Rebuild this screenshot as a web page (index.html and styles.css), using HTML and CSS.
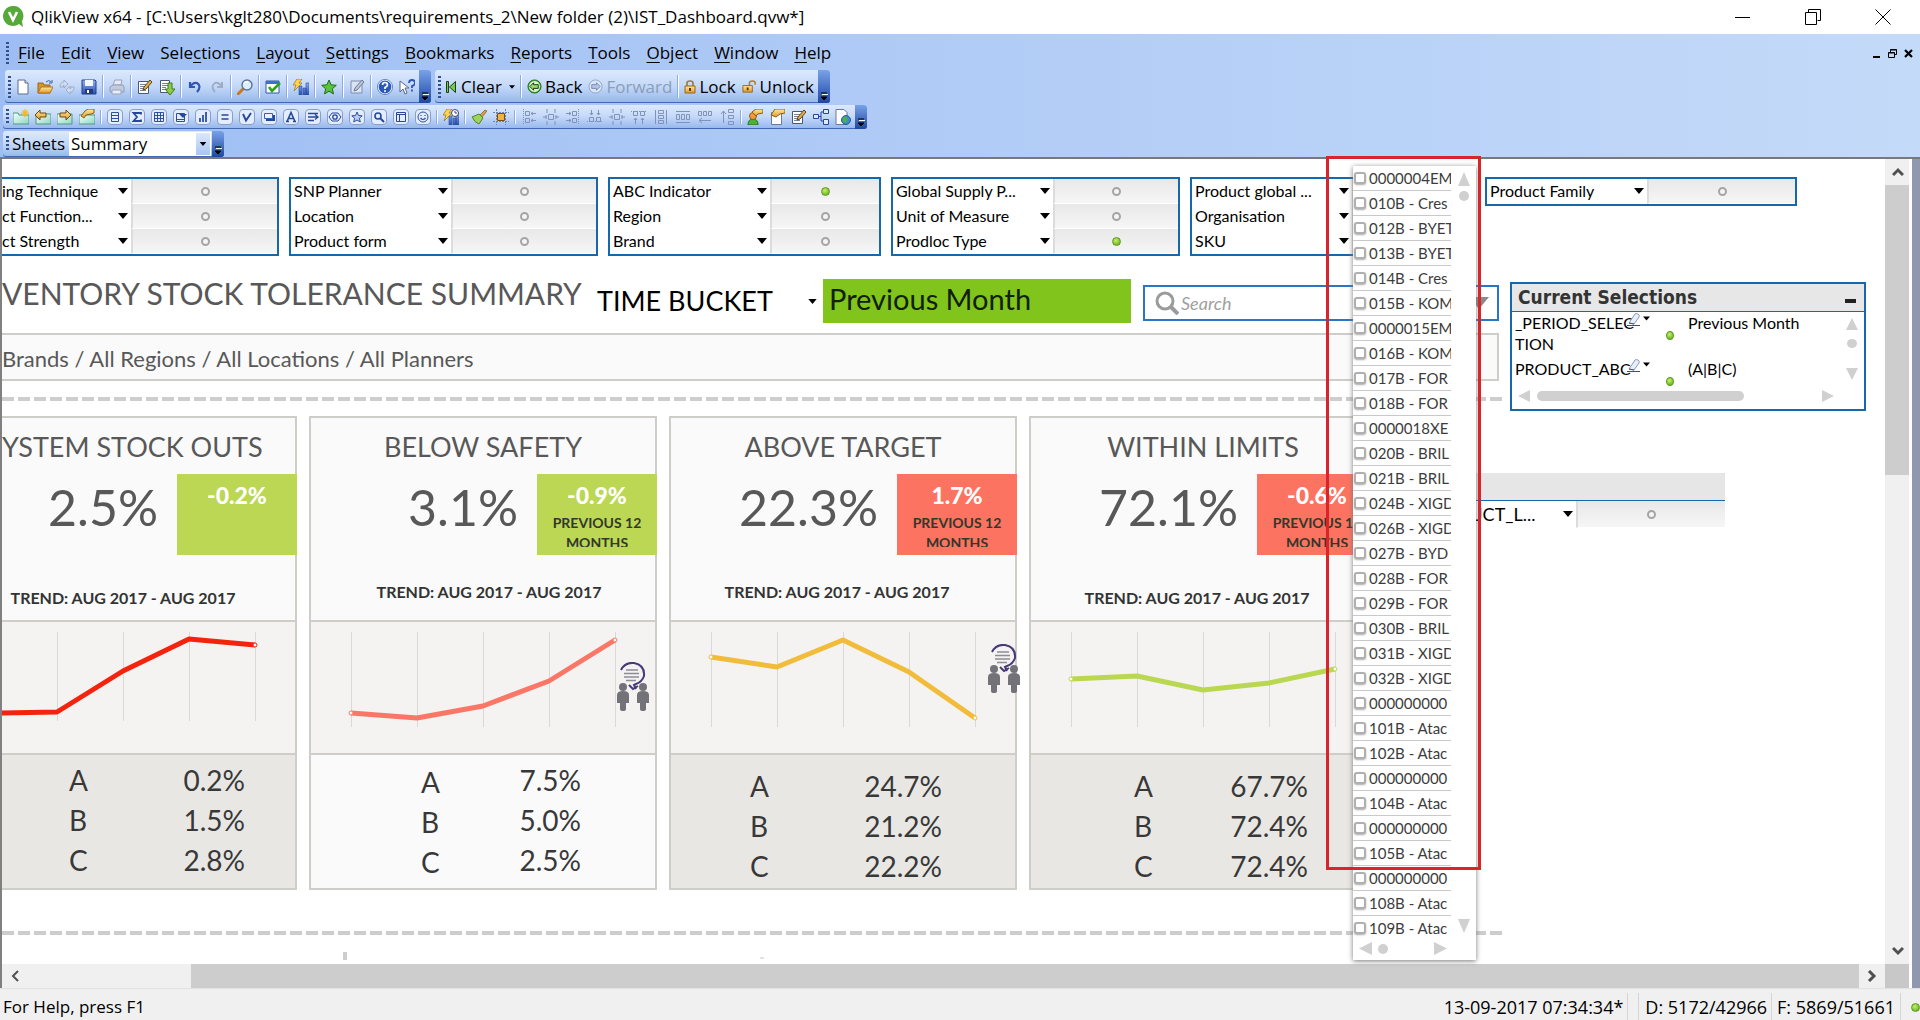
FILE: index.html
```html
<!DOCTYPE html>
<html lang="en">
<head>
<meta charset="utf-8">
<title>QlikView x64 - IST_Dashboard.qvw</title>
<link rel="stylesheet" href="styles.css">
</head>
<body>
<svg class="defs" aria-hidden="true">
  <defs>
    <linearGradient id="g-gold" x1="0" y1="0" x2="0" y2="1"><stop offset="0" stop-color="#ffe9a0"/><stop offset="1" stop-color="#e0992a"/></linearGradient>
    <linearGradient id="g-blue" x1="0" y1="0" x2="0" y2="1"><stop offset="0" stop-color="#8fb0ee"/><stop offset="1" stop-color="#2c52b4"/></linearGradient>
    <linearGradient id="g-sheet" x1="0" y1="0" x2="1" y2="1"><stop offset="0" stop-color="#f4fffb"/><stop offset="1" stop-color="#8fd6c0"/></linearGradient>
  </defs>
  <symbol id="new" viewBox="0 0 16 16"><path d="M3 1h7l3 3v11H3z" fill="#fff" stroke="#5d6c92"/><path d="M10 1v3h3" fill="#dde4f2" stroke="#5d6c92"/></symbol>
  <symbol id="open" viewBox="0 0 16 16"><path d="M1 14V4h5l1 2h6v8z" fill="#d8942e" stroke="#9a6416"/><path d="M1 14l3-6h12l-3 6z" fill="url(#g-gold)" stroke="#b0761e"/><path d="M9 3q3-3 5 0m1-2v3h-3" fill="none" stroke="#3b62b0"/></symbol>
  <symbol id="reload" viewBox="0 0 16 16"><path d="M1 8Q1 3 5 3V1l4 4-4 4V6Q4 6 4 8zM15 8q0 5-4 5v2l-4-4 4-4v3q1 0 1-2z" fill="#d3dced" stroke="#8c9bbb" stroke-width=".7"/></symbol>
  <symbol id="save" viewBox="0 0 16 16"><path d="M1 1h13l1 1v13H1z" fill="url(#g-blue)" stroke="#23418c"/><path d="M4 1h8v6H4z" fill="#f2f6ff"/><path d="M4 10h8v5H4z" fill="#223b7c"/><path d="M6 11h2v3H6z" fill="#fff"/></symbol>
  <symbol id="print" viewBox="0 0 16 16"><path d="M4 6l2-5h7l-1 5z" fill="#e4e9f4" stroke="#98a3bd"/><path d="M1 8l3-2h10l1 2v5H1z" fill="#c3ccde" stroke="#929db8"/><path d="M3 11h9v4H3z" fill="#e9edf6" stroke="#98a3bd"/></symbol>
  <symbol id="edit" viewBox="0 0 16 16"><path d="M1.500 2.500h10v12h-10z" fill="#fff" stroke="#4a5776"/><path d="M3 5.500h6M3 7.500h5M3 9.500h3M3 11.500h6" stroke="#76819c"/><path d="M6 11l1-3 6-7 2 2-6 7z" fill="#e2af4d" stroke="#5b431a"/></symbol>
  <symbol id="export" viewBox="0 0 16 16"><path d="M1.500 1.500h9v12h-9z" fill="#fff" stroke="#4a5776"/><path d="M3 4.500h6M3 6.500h6M3 8.500h4M3 10.500h4" stroke="#76819c"/><path d="M9 4h4v6h3l-5 6-5-6h3z" fill="#8ecb4d" stroke="#3d7a14"/></symbol>
  <symbol id="undo" viewBox="0 0 16 16"><path d="M3 3v5h5M3 8q3-5 7-4 5 3 0 9" fill="none" stroke="#2f57b4" stroke-width="2.200"/></symbol>
  <symbol id="redo" viewBox="0 0 16 16"><path d="M13 3v5H8M13 8q-3-5-7-4-5 3 0 9" fill="none" stroke="#a0abc6" stroke-width="2"/></symbol>
  <symbol id="find" viewBox="0 0 16 16"><path d="M7 9l-6 6" stroke="#c9791d" stroke-width="3" stroke-linecap="round"/><circle cx="10" cy="6" r="5" fill="#d9efff" stroke="#5a7398" stroke-width="1.400"/><path d="M7 5q1-3 4-2" fill="none" stroke="#fff" stroke-width="1.500"/></symbol>
  <symbol id="check" viewBox="0 0 16 16"><path d="M1 2h13v12H1z" fill="#fff" stroke="#2d58ab"/><path d="M1 2h13v3H1z" fill="#3f6fc8"/><path d="M4 8l3 4 8-8" fill="none" stroke="#2fa21d" stroke-width="2.600"/></symbol>
  <symbol id="quick" viewBox="0 0 16 16"><path d="M6 7h3v9H6zM10 9h3v7h-3zM13 4h3v12h-3z" fill="url(#g-blue)" stroke="#274a9a" stroke-width=".6"/><path d="M4 0h5L6 4h3L1 12l2-6H0z" fill="#ffd34d" stroke="#9a7212" stroke-width=".7"/></symbol>
  <symbol id="star" viewBox="0 0 16 16"><path d="M8 1l2.100 4.800 5.200.5-4 3.500 1.200 5.100L8 12.200l-4.500 2.700 1.200-5.100-4-3.500 5.200-.5z" fill="#58c53a" stroke="#226b16"/></symbol>
  <symbol id="notes" viewBox="0 0 16 16"><path d="M2 2h11v12H2z" fill="#dbe3f1" stroke="#7f8dac"/><path d="M5 12l1-3 7-8 2 2-7 8z" fill="#b9c4da" stroke="#6e7c9c"/></symbol>
  <symbol id="help" viewBox="0 0 16 16"><circle cx="8" cy="8" r="7" fill="#2a58bb" stroke="#fff" stroke-width="1.200"/><circle cx="8" cy="8" r="7.600" fill="none" stroke="#3c5ea6" stroke-width=".7"/><path d="M5.500 6q0-2.500 2.500-2.500T10.500 6Q10.500 7.300 8 8.500V10M8 11.300v1.700" fill="none" stroke="#fff" stroke-width="1.700"/></symbol>
  <symbol id="what" viewBox="0 0 16 16"><path d="M1 2v11l3-3 2 5 2-1-2-5h4z" fill="#fff" stroke="#5a6684"/><path d="M10 4q0-3 3-3t3 3q0 2-3 3v2M13 10.500v2" fill="none" stroke="#2c55b2" stroke-width="1.800"/></symbol>
  <symbol id="sheet-new" viewBox="0 0 16 16"><path d="M0 4h5l1 2h10v9H0z" fill="url(#g-sheet)" stroke="#4c9a84"/><path d="M12 0v8M8 4h8M9.500 1.500l5 5M14.500 1.500l-5 5" stroke="#f5b921" stroke-width="1.200"/></symbol>
  <symbol id="sheet-l" viewBox="0 0 16 16"><path d="M1 5h15v10H1z" fill="url(#g-sheet)" stroke="#4c9a84"/><path d="M0 6l5-5v3h6v4H5v3z" fill="url(#g-gold)" stroke="#70480d"/></symbol>
  <symbol id="sheet-r" viewBox="0 0 16 16"><path d="M0 5h15v10H0z" fill="url(#g-sheet)" stroke="#4c9a84"/><path d="M14 6L9 1v3H3v4h6v3z" fill="url(#g-gold)" stroke="#70480d"/></symbol>
  <symbol id="sheet-p" viewBox="0 0 16 16"><path d="M0 6h16v9H0z" fill="url(#g-sheet)" stroke="#4c9a84"/><path d="M2 7l4-5 3-2h6v4l-3 1-5 1-2 3z" fill="url(#g-gold)" stroke="#8a5c14"/></symbol>
  <symbol id="box" viewBox="0 0 16 16"><rect x=".5" y=".5" width="15" height="15" rx="3.500" fill="#e3edff" stroke="#8b9cc6"/></symbol>
  <symbol id="o-list" viewBox="0 0 16 16"><use href="#box"/><path d="M4.500 3.500h7v9h-7zM4.500 6.500h7M4.500 9.500h7" fill="none" stroke="#2f4f9f"/></symbol>
  <symbol id="o-sum" viewBox="0 0 16 16"><use href="#box"/><path d="M12 5.500V4H4.500L8 8l-3.500 4H12v-1.500" fill="none" stroke="#27479a" stroke-width="1.800"/></symbol>
  <symbol id="o-grid" viewBox="0 0 16 16"><use href="#box"/><path d="M3.500 3.500h9v9h-9zM6.500 3.500v9M9.500 3.500v9M3.500 6.500h9M3.500 9.500h9" fill="none" stroke="#2f4f9f"/></symbol>
  <symbol id="o-multi" viewBox="0 0 16 16"><use href="#box"/><path d="M3.500 4.500h8v8h-8zM3.500 10.500h8" fill="none" stroke="#2f4f9f"/><path d="M6 5h8l-4 4z" fill="#27479a"/></symbol>
  <symbol id="o-bar" viewBox="0 0 16 16"><use href="#box"/><path d="M4 9h2v4H4zM7 6h2v7H7zM10 3h2v10h-2z" fill="#3d5faf"/></symbol>
  <symbol id="o-eq" viewBox="0 0 16 16"><use href="#box"/><path d="M4.500 6h7M4.500 10h7" stroke="#27479a" stroke-width="1.600"/></symbol>
  <symbol id="o-v" viewBox="0 0 16 16"><use href="#box"/><path d="M4 5l3 6.500L12 4" fill="none" stroke="#27479a" stroke-width="1.900"/></symbol>
  <symbol id="o-btn" viewBox="0 0 16 16"><use href="#box"/><path d="M5 6h9v6H5z" fill="#27479a"/><path d="M3.500 4.500h8v5h-8z" fill="#eaf1ff" stroke="#3d5faf"/></symbol>
  <symbol id="o-text" viewBox="0 0 16 16"><use href="#box"/><path d="M4 12.500L8 3.500l4 9M5.500 9.500h5M3 12.500h3M10 12.500h3" fill="none" stroke="#27479a" stroke-width="1.600"/></symbol>
  <symbol id="o-line" viewBox="0 0 16 16"><use href="#box"/><path d="M3 4.500h10M3 8h9M3 11.500h6M10 5.500L13 8l-3 2.500" fill="none" stroke="#27479a" stroke-width="1.300"/></symbol>
  <symbol id="o-slide" viewBox="0 0 16 16"><use href="#box"/><path d="M5 4h6l3 4-3 4H5L2 8z" fill="none" stroke="#27479a"/><circle cx="8" cy="8" r="2.200" fill="none" stroke="#27479a" stroke-width="1.300"/></symbol>
  <symbol id="o-star" viewBox="0 0 16 16"><use href="#box"/><path d="M8 3l1.500 3.500 3.700.3-2.800 2.400.9 3.800L8 11l-3.300 2 .9-3.800-2.800-2.400 3.700-.3z" fill="#b9cbf2" stroke="#2f4f9f"/></symbol>
  <symbol id="o-find" viewBox="0 0 16 16"><use href="#box"/><circle cx="7" cy="7" r="3" fill="none" stroke="#27479a" stroke-width="1.600"/><path d="M9 9l4 4" stroke="#27479a" stroke-width="2"/></symbol>
  <symbol id="o-cont" viewBox="0 0 16 16"><use href="#box"/><path d="M3.500 3.500h9v9h-9zM3.500 5.500h9M6.500 5.500v7" fill="none" stroke="#27479a"/></symbol>
  <symbol id="o-face" viewBox="0 0 16 16"><use href="#box"/><circle cx="8" cy="8" r="5" fill="none" stroke="#2f4f9f"/><path d="M6 6v1M10 6v1M5.500 9q2.500 3 5 0" fill="none" stroke="#2f4f9f" stroke-width="1.200"/></symbol>
  <symbol id="timechart" viewBox="0 0 16 16"><use href="#quick"/><circle cx="12" cy="4" r="3.500" fill="#fff" stroke="#3b4a6e"/><path d="M12 2v2h2" fill="none" stroke="#3b4a6e"/></symbol>
  <symbol id="brush" viewBox="0 0 16 16"><path d="M9 6l5-5 2 1-5 6z" fill="#d9a24a" stroke="#7e5412" stroke-width=".7"/><path d="M1 8l7-3 4 4-4 6q-4-1-7-7z" fill="#9fd35d" stroke="#4d8a1d"/></symbol>
  <symbol id="snap" viewBox="0 0 16 16"><path d="M3.500 0v16M12.500 0v16M0 3.500h16M0 12.500h16" stroke="#6d83bb" stroke-dasharray="2 1"/><path d="M4.500 4.500h7v7h-7z" fill="#f0b33d" stroke="#7a5010"/></symbol>
  <symbol id="al-v" viewBox="0 0 16 16"><path d="M2.500 0v16" stroke="#7f92bd" stroke-dasharray="1 1"/><path d="M4.500 2.500h4v4h-4zM4.500 9.500h4v4h-4zM10 4.500h5M10 11.500h5M12 3l-2 1.500L12 6M12 10l-2 1.500 2 1.500" fill="none" stroke="#8292b8"/></symbol>
  <symbol id="al-c" viewBox="0 0 16 16"><path d="M5.500 5.500h5v5h-5zM0 8h4M12 8h4M3 6v4M13 6v4M4 0v4M12 0v4M4 12v4M12 12v4" fill="none" stroke="#8292b8"/></symbol>
  <symbol id="al-h" viewBox="0 0 16 16"><path d="M0 12.500h16" stroke="#7f92bd" stroke-dasharray="1 1"/><path d="M2.500 8.500h4v4h-4zM9.500 8.500h4v4h-4zM4.500 1v5M11.500 1v5M3 4l1.500 2L6 4M10 4l1.500 2L13 4" fill="none" stroke="#8292b8"/></symbol>
  <symbol id="al-t" viewBox="0 0 16 16"><path d="M0 2.500h16" stroke="#7f92bd" stroke-dasharray="1 1"/><path d="M2.500 2.500h4v4h-4zM9.500 2.500h4v4h-4zM4.500 9v6M11.500 9v6M3 11l1.500-2L6 11M10 11l1.500-2 1.500 2" fill="none" stroke="#8292b8"/></symbol>
  <symbol id="al-s" viewBox="0 0 16 16"><path d="M1 2.500h14M1 13.500h14" stroke="#7f92bd"/><path d="M1.500 5.500h3v5h-3zM6.500 5.500h3v5h-3zM11.500 5.500h3v5h-3z" fill="none" stroke="#8292b8"/></symbol>
  <symbol id="al-r" viewBox="0 0 16 16"><path d="M1.500 2.500h3v4h-3zM6.500 2.500h3v4h-3zM11.500 2.500h3v4h-3zM2 11.500h12M5 9l-3 2.500L5 14" fill="none" stroke="#8292b8"/></symbol>
  <symbol id="al-u" viewBox="0 0 16 16"><path d="M9.500.5h5v3h-5zM9.500 6.500h5v3h-5zM9.500 12.500h5v3h-5zM4.500 2v12M2 5l2.500-3L7 5" fill="none" stroke="#8292b8"/></symbol>
  <symbol id="user" viewBox="0 0 16 16"><path d="M1 16q0-6 5-6t5 6z" fill="#4fae3d" stroke="#26701c"/><circle cx="6" cy="7" r="3.500" fill="#f09a3c" stroke="#9c5a12"/><path d="M5 3l4-3h7v4l-5 1-2 2z" fill="url(#g-gold)" stroke="#8a5c14"/></symbol>
  <symbol id="docp" viewBox="0 0 16 16"><path d="M2.500 3.500h10v12h-10z" fill="#fff" stroke="#6a7899"/><path d="M2 6l4-6h10v4l-5 1-4 3z" fill="url(#g-gold)" stroke="#8a5c14"/></symbol>
  <symbol id="tview" viewBox="0 0 16 16"><path d="M.5 5.500h5v4h-5zM10.500.5h5v4h-5zM10.500 10.500h5v5h-5z" fill="#dfe9ff" stroke="#27479a"/><path d="M6 7.500h2M8 3v9M8 3h2M8 12h2" fill="none" stroke="#27479a"/></symbol>
  <symbol id="web" viewBox="0 0 16 16"><path d="M1 .5h8l3 3v12H1z" fill="#fff" stroke="#6a7899"/><circle cx="11" cy="11" r="4.500" fill="#3f88d6" stroke="#2a5f8a"/><path d="M8 9q3-3 4 0t-2 5q-3-1-2-5z" fill="#4bb544"/></symbol>
  <symbol id="clear" viewBox="0 0 10 12"><path d="M.5.5h2v11h-2zM9.500.5v11L3.500 6z" fill="#6fcf4a" stroke="#1f3d1b"/></symbol>
  <symbol id="back" viewBox="0 0 16 16"><circle cx="8" cy="8" r="7" fill="#4cae38" stroke="#1f6a17"/><circle cx="8" cy="8" r="5.800" fill="#dff5d3"/><path d="M3 8l4-4v2h5v4H7v2z" fill="#8fdc68" stroke="#19331a"/></symbol>
  <symbol id="fwd" viewBox="0 0 16 16"><circle cx="8" cy="8" r="7" fill="#dbe5f8" stroke="#93a3c8"/><path d="M13 8L9 4v2H4v4h5v2z" fill="#b5c4e6" stroke="#7688b4"/></symbol>
  <symbol id="lock" viewBox="0 0 12 14"><path d="M3 6V3q0-2 3-2t3 2v3" fill="none" stroke="#9a7a32" stroke-width="1.600"/><path d="M1 6h10v7H1z" fill="url(#g-gold)" stroke="#9a6416"/><path d="M6 8v3" stroke="#5a3a08" stroke-width="2"/></symbol>
  <symbol id="unlock" viewBox="0 0 16 14"><path d="M8 6V3q0-2 3-2t3 2v2" fill="none" stroke="#b07a22" stroke-width="1.600"/><path d="M1 6h10v7H1z" fill="url(#g-gold)" stroke="#9a6416"/><path d="M6 8v3" stroke="#5a3a08" stroke-width="2"/></symbol>
  <symbol id="more" viewBox="0 0 8 10"><path d="M1 2h6M1 6h6l-3 3z" fill="#000" stroke="#000"/><path d="M2 3.500h6" stroke="#fff"/></symbol>
  <symbol id="down" viewBox="0 0 10 6"><path d="M0 0h10L5 6z" fill="currentColor"/></symbol>
  <symbol id="up" viewBox="0 0 12 14"><path d="M6 0l6 14H0z" fill="currentColor"/></symbol>
  <symbol id="talk" viewBox="0 0 32 50"><path d="M4 8Q8 0 17 1q11 2 10 13-2 6-8 8l-2 1 2 4M12 23l4 4 5-3" fill="none" stroke="#473a78" stroke-width="2"/><path d="M9 8h12M7 11.500h15M7 15h15M9 18.500h10" stroke="#8d8d97" stroke-width="1.700"/><g fill="#727278"><circle cx="6" cy="25" r="4"/><circle cx="26" cy="25" r="4"/><path d="M0 33q0-4 6-4t6 4v8H9v6q0 2-3 2t-3-2v-6H0zM20 33q0-4 6-4t6 4v8h-3v6q0 2-3 2t-3-2v-6h-3z"/></g></symbol>
  <symbol id="eraser" viewBox="0 0 14 14"><path d="M2 11l6-9q1-1 3 0t1 3l-5 7z" fill="#e6effb" stroke="#8a9ab5"/><path d="M0 13.500h13M2 11l5 1" stroke="#44506b" stroke-width="1"/></symbol>
</svg>

<header class="titlebar">
  <svg class="logo" viewBox="0 0 22 22" aria-hidden="true"><path d="M10 0a10 10 0 1 0 6 18l4 3-1-6A10 10 0 0 0 10 0z" fill="#55a939"/><path d="M6 6l4 8 4-8" fill="none" stroke="#fff" stroke-width="2.600"/></svg>
  <h1 class="titlebar-text">QlikView x64 - [C:\Users\kglt280\Documents\requirements_2\New folder (2)\IST_Dashboard.qvw*]</h1>
  <div class="win-buttons">
    <button aria-label="Minimize"><svg viewBox="0 0 16 16"><path d="M0 8.500h15" stroke="#000"/></svg></button>
    <button aria-label="Restore"><svg viewBox="0 0 16 16"><path d="M.5 3.500h11v12H.5zM3.500 3.500v-3h12v11h-3" fill="none" stroke="#000"/></svg></button>
    <button aria-label="Close"><svg viewBox="0 0 16 16"><path d="M.5.5l15 15M15.500.5l-15 15" stroke="#000"/></svg></button>
  </div>
</header>

<div class="chrome">
  <nav class="menubar">
    <span class="grip"></span>
    <button><u>F</u>ile</button><button><u>E</u>dit</button><button><u>V</u>iew</button><button>Sele<u>c</u>tions</button><button><u>L</u>ayout</button><button><u>S</u>ettings</button><button><u>B</u>ookmarks</button><button><u>R</u>eports</button><button><u>T</u>ools</button><button><u>O</u>bject</button><button><u>W</u>indow</button><button><u>H</u>elp</button>
    <div class="mdi-buttons">
      <button aria-label="Minimize document"><svg viewBox="0 0 9 9"><path d="M1 8h7" stroke="#000" stroke-width="2"/></svg></button>
      <button aria-label="Restore document"><svg viewBox="0 0 9 9"><path d="M.5 3.500h6v5h-6zM.5 4h6M2.500 3V.5h6v5H7M2.500 1h6" fill="none" stroke="#000"/></svg></button>
      <button aria-label="Close document"><svg viewBox="0 0 9 9"><path d="M1 1l7 7M8 1L1 8" stroke="#000" stroke-width="2.200"/></svg></button>
    </div>
  </nav>

  <div class="bar-row">
    <div class="bar bar-tall">
      <span class="grip"></span>
      <button class="tb" aria-label="New"><svg><use href="#new"/></svg></button>
      <button class="tb" aria-label="Open"><svg><use href="#open"/></svg></button>
      <button class="tb" aria-label="Refresh"><svg><use href="#reload"/></svg></button>
      <button class="tb" aria-label="Save"><svg><use href="#save"/></svg></button>
      <i class="sep"></i>
      <button class="tb" aria-label="Print"><svg><use href="#print"/></svg></button>
      <i class="sep"></i>
      <button class="tb" aria-label="Edit script"><svg><use href="#edit"/></svg></button>
      <button class="tb" aria-label="Reload"><svg><use href="#export"/></svg></button>
      <i class="sep"></i>
      <button class="tb" aria-label="Undo"><svg><use href="#undo"/></svg></button>
      <button class="tb" aria-label="Redo"><svg><use href="#redo"/></svg></button>
      <i class="sep"></i>
      <button class="tb" aria-label="Search"><svg><use href="#find"/></svg></button>
      <i class="sep"></i>
      <button class="tb" aria-label="Current selections"><svg><use href="#check"/></svg></button>
      <i class="sep"></i>
      <button class="tb" aria-label="Quick chart"><svg><use href="#quick"/></svg></button>
      <i class="sep"></i>
      <button class="tb" aria-label="Add bookmark"><svg><use href="#star"/></svg></button>
      <i class="sep"></i>
      <button class="tb" aria-label="Notes"><svg><use href="#notes"/></svg></button>
      <i class="sep"></i>
      <button class="tb" aria-label="Help topics"><svg><use href="#help"/></svg></button>
      <button class="tb" aria-label="Context help"><svg><use href="#what"/></svg></button>
      <button class="more" aria-label="Toolbar options"><svg><use href="#more"/></svg></button>
    </div>
    <div class="bar bar-tall">
      <span class="grip"></span>
      <button class="tx"><svg class="ic-clear"><use href="#clear"/></svg>Clear<svg class="ic-drop"><use href="#down"/></svg></button>
      <i class="sep"></i>
      <button class="tx"><svg><use href="#back"/></svg>Back</button>
      <button class="tx" disabled><svg><use href="#fwd"/></svg>Forward</button>
      <i class="sep"></i>
      <button class="tx"><svg class="ic-lock"><use href="#lock"/></svg>Lock</button>
      <button class="tx"><svg><use href="#unlock"/></svg>Unlock</button>
      <button class="more" aria-label="Toolbar options"><svg><use href="#more"/></svg></button>
    </div>
  </div>

  <div class="bar-row">
    <div class="bar">
      <span class="grip"></span>
      <button class="tb" aria-label="Add sheet"><svg><use href="#sheet-new"/></svg></button>
      <button class="tb" aria-label="Promote sheet"><svg><use href="#sheet-l"/></svg></button>
      <button class="tb" aria-label="Demote sheet"><svg><use href="#sheet-r"/></svg></button>
      <button class="tb" aria-label="Sheet properties"><svg><use href="#sheet-p"/></svg></button>
      <i class="sep"></i>
      <button class="tb" aria-label="List box"><svg><use href="#o-list"/></svg></button>
      <button class="tb" aria-label="Statistics box"><svg><use href="#o-sum"/></svg></button>
      <button class="tb" aria-label="Table box"><svg><use href="#o-grid"/></svg></button>
      <button class="tb" aria-label="Multi box"><svg><use href="#o-multi"/></svg></button>
      <button class="tb" aria-label="Chart"><svg><use href="#o-bar"/></svg></button>
      <button class="tb" aria-label="Input box"><svg><use href="#o-eq"/></svg></button>
      <button class="tb" aria-label="Current selections box"><svg><use href="#o-v"/></svg></button>
      <button class="tb" aria-label="Button"><svg><use href="#o-btn"/></svg></button>
      <button class="tb" aria-label="Text object"><svg><use href="#o-text"/></svg></button>
      <button class="tb" aria-label="Line or arrow"><svg><use href="#o-line"/></svg></button>
      <button class="tb" aria-label="Slider"><svg><use href="#o-slide"/></svg></button>
      <button class="tb" aria-label="Bookmark object"><svg><use href="#o-star"/></svg></button>
      <button class="tb" aria-label="Search object"><svg><use href="#o-find"/></svg></button>
      <button class="tb" aria-label="Container"><svg><use href="#o-cont"/></svg></button>
      <button class="tb" aria-label="Custom object"><svg><use href="#o-face"/></svg></button>
      <i class="sep"></i>
      <button class="tb" aria-label="Time chart wizard"><svg><use href="#timechart"/></svg></button>
      <i class="sep"></i>
      <button class="tb" aria-label="Format painter"><svg><use href="#brush"/></svg></button>
      <button class="tb" aria-label="Design grid"><svg><use href="#snap"/></svg></button>
      <i class="sep"></i>
      <button class="tb" aria-label="Align left"><svg><use href="#al-v"/></svg></button>
      <button class="tb" aria-label="Center horizontally"><svg><use href="#al-c"/></svg></button>
      <button class="tb flip" aria-label="Align right"><svg><use href="#al-v"/></svg></button>
      <button class="tb" aria-label="Align bottom"><svg><use href="#al-h"/></svg></button>
      <button class="tb" aria-label="Center vertically"><svg><use href="#al-c"/></svg></button>
      <button class="tb" aria-label="Align top"><svg><use href="#al-t"/></svg></button>
      <button class="tb turn" aria-label="Space vertically"><svg><use href="#al-s"/></svg></button>
      <button class="tb" aria-label="Space horizontally"><svg><use href="#al-s"/></svg></button>
      <button class="tb" aria-label="Adjust left"><svg><use href="#al-r"/></svg></button>
      <button class="tb" aria-label="Adjust top"><svg><use href="#al-u"/></svg></button>
      <i class="sep"></i>
      <button class="tb" aria-label="User preferences"><svg><use href="#user"/></svg></button>
      <button class="tb" aria-label="Document properties"><svg><use href="#docp"/></svg></button>
      <button class="tb" aria-label="Edit module"><svg><use href="#edit"/></svg></button>
      <button class="tb" aria-label="Table viewer"><svg><use href="#tview"/></svg></button>
      <button class="tb" aria-label="WebView"><svg><use href="#web"/></svg></button>
      <button class="more" aria-label="Toolbar options"><svg><use href="#more"/></svg></button>
    </div>
  </div>

  <div class="bar-row">
    <div class="bar bar-sheets">
      <span class="grip"></span>
      <label for="sheets">Sheets</label>
      <div class="combo">
        <select id="sheets"><option>Summary</option></select>
        <svg class="combo-arrow" aria-hidden="true"><use href="#down"/></svg>
      </div>
      <button class="more" aria-label="Toolbar options"><svg><use href="#more"/></svg></button>
    </div>
  </div>
</div>

<div class="workspace">
  <main class="sheet">
    <section class="filters">
      <div class="multibox multibox-cut">
        <button>ing Technique<svg><use href="#down"/></svg></button><span class="val"><i class="dot"></i></span>
        <button>ct Function...<svg><use href="#down"/></svg></button><span class="val"><i class="dot"></i></span>
        <button>ct Strength<svg><use href="#down"/></svg></button><span class="val"><i class="dot"></i></span>
      </div>
      <div class="multibox">
        <button>SNP Planner<svg><use href="#down"/></svg></button><span class="val"><i class="dot"></i></span>
        <button>Location<svg><use href="#down"/></svg></button><span class="val"><i class="dot"></i></span>
        <button>Product form<svg><use href="#down"/></svg></button><span class="val"><i class="dot"></i></span>
      </div>
      <div class="multibox">
        <button>ABC Indicator<svg><use href="#down"/></svg></button><span class="val"><i class="dot dot-on"></i></span>
        <button>Region<svg><use href="#down"/></svg></button><span class="val"><i class="dot"></i></span>
        <button>Brand<svg><use href="#down"/></svg></button><span class="val"><i class="dot"></i></span>
      </div>
      <div class="multibox">
        <button>Global Supply P...<svg><use href="#down"/></svg></button><span class="val"><i class="dot"></i></span>
        <button>Unit of Measure<svg><use href="#down"/></svg></button><span class="val"><i class="dot"></i></span>
        <button>Prodloc Type<svg><use href="#down"/></svg></button><span class="val"><i class="dot dot-on"></i></span>
      </div>
      <div class="multibox">
        <button>Product global ...<svg><use href="#down"/></svg></button><span class="val"></span>
        <button>Organisation<svg><use href="#down"/></svg></button><span class="val"></span>
        <button>SKU<svg><use href="#down"/></svg></button><span class="val"></span>
        <div class="popup">
          <ul class="popup-list">
            <li><label><input type="checkbox">0000004EM</label></li>
            <li><label><input type="checkbox">010B - Cres</label></li>
            <li><label><input type="checkbox">012B - BYET</label></li>
            <li><label><input type="checkbox">013B - BYET</label></li>
            <li><label><input type="checkbox">014B - Cres</label></li>
            <li><label><input type="checkbox">015B - KOM</label></li>
            <li><label><input type="checkbox">0000015EM</label></li>
            <li><label><input type="checkbox">016B - KOM</label></li>
            <li><label><input type="checkbox">017B - FOR</label></li>
            <li><label><input type="checkbox">018B - FOR</label></li>
            <li><label><input type="checkbox">0000018XE</label></li>
            <li><label><input type="checkbox">020B - BRIL</label></li>
            <li><label><input type="checkbox">021B - BRIL</label></li>
            <li><label><input type="checkbox">024B - XIGD</label></li>
            <li><label><input type="checkbox">026B - XIGD</label></li>
            <li><label><input type="checkbox">027B - BYD</label></li>
            <li><label><input type="checkbox">028B - FOR</label></li>
            <li><label><input type="checkbox">029B - FOR</label></li>
            <li><label><input type="checkbox">030B - BRIL</label></li>
            <li><label><input type="checkbox">031B - XIGD</label></li>
            <li><label><input type="checkbox">032B - XIGD</label></li>
            <li><label><input type="checkbox">000000000</label></li>
            <li><label><input type="checkbox">101B - Atac</label></li>
            <li><label><input type="checkbox">102B - Atac</label></li>
            <li><label><input type="checkbox">000000000</label></li>
            <li><label><input type="checkbox">104B - Atac</label></li>
            <li><label><input type="checkbox">000000000</label></li>
            <li><label><input type="checkbox">105B - Atac</label></li>
            <li><label><input type="checkbox">000000000</label></li>
            <li><label><input type="checkbox">108B - Atac</label></li>
            <li><label><input type="checkbox">109B - Atac</label></li>
          </ul>
          <div class="popup-vscroll"><svg><use href="#up"/></svg><i></i><svg class="flip-v"><use href="#up"/></svg></div>
          <div class="popup-hscroll"><svg viewBox="0 0 12 12"><path d="M12 0v12L0 6z"/></svg><i></i><svg viewBox="0 0 12 12"><path d="M0 0v12l12-6z"/></svg></div>
          <div class="callout"></div>
        </div>
      </div>
      <div class="multibox">
        <button>Product Family<svg><use href="#down"/></svg></button><span class="val"><i class="dot"></i></span>
      </div>
    </section>

    <div class="columns">
      <section class="dash">
        <div class="dash-head">
          <h2>VENTORY STOCK TOLERANCE SUMMARY</h2>
          <button class="bucket">TIME BUCKET<svg><use href="#down"/></svg></button>
          <div class="bucket-value">Previous Month</div>
          <div class="search">
            <svg class="search-icon" viewBox="0 0 24 24" aria-hidden="true"><circle cx="10" cy="10" r="8" fill="none" stroke="#9b9b9b" stroke-width="3"/><path d="M16 16l7 7" stroke="#9b9b9b" stroke-width="4"/></svg>
            <input type="text" placeholder="Search" aria-label="Search">
            <svg class="search-drop" aria-hidden="true"><use href="#down"/></svg>
          </div>
        </div>
        <p class="crumbs">Brands / All Regions / All Locations / All Planners</p>
        <div class="dashes"></div>

        <div class="cards">
          <article class="card card-outs">
            <div class="card-top">
              <h3>YSTEM STOCK OUTS</h3>
              <div class="kpi"><strong>2.5%</strong><div class="badge badge-good"><b>-0.2%</b></div></div>
              <p class="trend trend-low">TREND: AUG 2017 - AUG 2017</p>
            </div>
            <div class="chart">
              <svg viewBox="0 0 293 131"><path class="gridline" d="M55.500 10v89M121.500 10v89M187.500 10v89M253.500 10v89"/><path class="line" stroke="#f4230e" d="M0 91L55 90L121 49L187 17L253 23"/><circle cx="253" cy="23" r="2" stroke="#f4230e"/></svg>
            </div>
            <table class="abc">
              <tr><th>A</th><td>0.2%</td></tr><tr><th>B</th><td>1.5%</td></tr><tr><th>C</th><td>2.8%</td></tr>
            </table>
          </article>
          <article class="card card-below">
            <div class="card-top">
              <h3>BELOW SAFETY</h3>
              <div class="kpi"><strong>3.1%</strong><div class="badge badge-good"><b>-0.9%</b><span>PREVIOUS 12<br>MONTHS</span></div></div>
              <p class="trend">TREND: AUG 2017 - AUG 2017</p>
            </div>
            <div class="chart">
              <svg viewBox="0 0 344 131"><path class="gridline" d="M40.500 10v95M106.500 10v95M172.500 10v95M238.500 10v95M304.500 10v95"/><path class="line" stroke="#fa7666" d="M40 91L106 96L172 84L238 59L304 18"/><g stroke="#fa7666"><circle cx="40" cy="91" r="2"/><circle cx="304" cy="18" r="2"/></g></svg>
              <svg class="talk" aria-hidden="true"><use href="#talk"/></svg>
            </div>
            <table class="abc">
              <tr><th>A</th><td>7.5%</td></tr><tr><th>B</th><td>5.0%</td></tr><tr><th>C</th><td>2.5%</td></tr>
            </table>
          </article>
          <article class="card card-above">
            <div class="card-top">
              <h3>ABOVE TARGET</h3>
              <div class="kpi"><strong>22.3%</strong><div class="badge badge-bad"><b>1.7%</b><span>PREVIOUS 12<br>MONTHS</span></div></div>
              <p class="trend">TREND: AUG 2017 - AUG 2017</p>
            </div>
            <div class="chart">
              <svg viewBox="0 0 344 131"><path class="gridline" d="M40.500 10v95M106.500 10v95M172.500 10v95M238.500 10v95M304.500 10v95"/><path class="line" stroke="#f2bc3b" d="M40 35L106 45L172 18L238 50L304 96"/><g stroke="#f2bc3b"><circle cx="40" cy="35" r="2"/><circle cx="304" cy="96" r="2"/></g></svg>
              <svg class="talk" aria-hidden="true"><use href="#talk"/></svg>
            </div>
            <table class="abc">
              <tr><th>A</th><td>24.7%</td></tr><tr><th>B</th><td>21.2%</td></tr><tr><th>C</th><td>22.2%</td></tr>
            </table>
          </article>
          <article class="card card-within">
            <div class="card-top">
              <h3>WITHIN LIMITS</h3>
              <div class="kpi"><strong>72.1%</strong><div class="badge badge-bad"><b>-0.6%</b><span>PREVIOUS 12<br>MONTHS</span></div></div>
              <p class="trend trend-low">TREND: AUG 2017 - AUG 2017</p>
            </div>
            <div class="chart">
              <svg viewBox="0 0 344 131"><path class="gridline" d="M40.500 10v95M106.500 10v95M172.500 10v95M238.500 10v95M304.500 10v95"/><path class="line" stroke="#bad752" d="M40 57L106 54L172 68L238 61L304 47"/><g stroke="#bad752"><circle cx="40" cy="57" r="2"/><circle cx="304" cy="47" r="2"/></g></svg>
            </div>
            <table class="abc">
              <tr><th>A</th><td>67.7%</td></tr><tr><th>B</th><td>72.4%</td></tr><tr><th>C</th><td>72.4%</td></tr>
            </table>
          </article>
        </div>
        <div class="dashes dashes-end"></div>
        <div class="next-row"><i></i><i></i></div>
      </section>

      <aside class="side">
        <section class="selections">
          <header><h2>Current Selections</h2><button aria-label="Minimize selections"></button></header>
          <div class="sel-body">
            <div class="sel-rows">
              <div class="sel-row"><span class="sel-name">_PERIOD_SELEC<br>TION</span><svg class="eraser"><use href="#eraser"/></svg><svg class="sel-drop"><use href="#down"/></svg><i class="dot dot-on"></i><span>Previous Month</span></div>
              <div class="sel-row"><span class="sel-name">PRODUCT_ABC</span><svg class="eraser"><use href="#eraser"/></svg><svg class="sel-drop"><use href="#down"/></svg><i class="dot dot-on"></i><span>(A|B|C)</span></div>
            </div>
            <div class="sel-vscroll"><svg viewBox="0 0 12 12"><path d="M6 0l6 12H0z"/></svg><i></i><svg viewBox="0 0 12 12"><path d="M6 12L0 0h12z"/></svg></div>
          </div>
          <div class="sel-hscroll"><svg viewBox="0 0 12 12"><path d="M12 0v12L0 6z"/></svg><i></i><svg viewBox="0 0 12 12"><path d="M0 0v12l12-6z"/></svg></div>
        </section>
        <section class="product">
          <div class="product-head"></div>
          <div class="product-row"><button>JCT_L...<svg><use href="#down"/></svg></button><span class="val"><i class="dot"></i></span></div>
        </section>
      </aside>
    </div>
  </main>
  <div class="vscroll">
    <button aria-label="Scroll up"><svg viewBox="0 0 12 10"><path d="M1 8l5-5 5 5" fill="none" stroke="#505050" stroke-width="3"/></svg></button>
    <i></i>
    <button aria-label="Scroll down"><svg viewBox="0 0 12 10"><path d="M1 2l5 5 5-5" fill="none" stroke="#505050" stroke-width="3"/></svg></button>
  </div>
  <div class="hscroll">
    <button aria-label="Scroll left"><svg viewBox="0 0 10 12"><path d="M8 1L3 6l5 5" fill="none" stroke="#505050" stroke-width="2"/></svg></button>
    <i></i>
    <button aria-label="Scroll right"><svg viewBox="0 0 10 12"><path d="M2 1l5 5-5 5" fill="none" stroke="#505050" stroke-width="3"/></svg></button>
  </div>
  <div class="corner"></div>
</div>

<footer class="status">
  <span class="status-help">For Help, press F1</span>
  <span class="status-date">13-09-2017 07:34:34*</span>
  <span class="status-d">D: 5172/42966</span>
  <span class="status-f">F: 5869/51661</span>
  <span class="status-led"><i class="dot dot-on"></i></span>
</footer>
</body>
</html>
```
FILE: styles.css
```css
:root {
  --ui: "Open Sans", "Noto Sans", sans-serif;
  --doc: Lato, "Open Sans", sans-serif;
  --blue: #1668ac;
  --line: #cfcdc8;
  --ink: #585858;
}

* { box-sizing: border-box; }

body {
  margin: 0;
  min-height: 100vh;
  display: flex;
  flex-direction: column;
  background: #fff;
  color: #000;
  font: 17px/24px var(--ui);
}

button {
  padding: 0;
  border: 0;
  background: none;
  color: inherit;
  font: inherit;
}

h1, h2, h3, p, ul { margin: 0; padding: 0; font-weight: normal; }
svg { display: block; flex: none; }
.defs { position: absolute; width: 0; height: 0; }

/* Window title */
.titlebar { display: flex; align-items: center; height: 34px; padding-left: 3px; }
.logo { width: 22px; height: 22px; }
.titlebar-text { margin-left: 6px; font-size: 17px; line-height: 24px; white-space: nowrap; }
.win-buttons { display: flex; margin-left: auto; padding-right: 2px; }
.win-buttons button { display: grid; place-items: center; width: 70px; height: 34px; }
.win-buttons svg { width: 16px; height: 16px; }

/* Menu and toolbars */
.chrome { background: linear-gradient(90deg, #9dbdf3, #c4daf9); border-bottom: 2px solid #77797f; }
.menubar { display: flex; align-items: center; gap: 16px; height: 36px; padding: 2px 7px 0 6px; }
.menubar > button { line-height: 24px; }
.menubar u { text-underline-offset: 3px; }
.menubar .grip { margin-right: -7px; }
.mdi-buttons { display: flex; gap: 7px; margin-left: auto; }
.mdi-buttons svg { width: 9px; height: 9px; }
.grip { width: 3px; height: 22px; background: repeating-linear-gradient(#33508f 0 2px, transparent 2px 4px); }
.bar-row { display: flex; gap: 4px; padding: 0 0 2px 3px; }
.bar-row:last-child { padding-bottom: 0; }
.bar {
  display: flex;
  align-items: center;
  height: 24px;
  padding-left: 3px;
  border-radius: 3px;
  background: linear-gradient(#dce9fd, #c3d8f8 50%, #94b6ec);
  box-shadow: inset 0 -1px #3f68b5;
}
.bar .grip { margin-right: 1px; height: 16px; }
.bar-tall { height: 33px; }
.bar-tall:first-child { margin-left: 2px; }
.bar-tall .grip { height: 22px; }
.tb { display: grid; place-items: center; width: 22px; height: 22px; }
.tb svg { width: 16px; height: 16px; }
.flip { transform: scaleX(-1); }
.turn { transform: rotate(90deg); }
.flip-v { transform: scaleY(-1); }
.sep { align-self: stretch; width: 2px; margin: 5px 2px; background: #fff; border-left: 1px solid #8eabdf; }
.more {
  display: flex;
  align-items: end;
  justify-content: center;
  align-self: stretch;
  width: 12px;
  margin-left: 1px;
  padding-bottom: 2px;
  border-radius: 0 3px 3px 0;
  background: linear-gradient(#79a2ea, #1f47a0);
}
.more svg { width: 8px; height: 10px; }
.tx { display: flex; align-items: center; gap: 3px; height: 28px; padding: 0 3px; }
.tx svg { width: 15px; height: 15px; }
.tx .ic-clear { width: 10px; height: 12px; margin: 0 2px 0 1px; }
.tx .ic-lock { width: 12px; height: 14px; }
.tx .ic-drop { width: 6px; height: 4px; margin-left: 4px; }
.tx:disabled { color: #8c9db8; }
.bar-sheets { height: 26px; }
.bar-sheets label { margin: 0 4px 0 2px; }
.combo { position: relative; }
.combo select {
  appearance: none;
  display: block;
  width: 142px;
  height: 24px;
  padding: 0 1px;
  border: 1px solid #fff;
  border-radius: 0;
  background: #fff;
  font: inherit;
  line-height: 22px;
}
.combo-arrow {
  position: absolute;
  top: 1px;
  right: 1px;
  width: 14px;
  height: 22px;
  padding: 9px 3px;
  background: linear-gradient(#dbe8fd, #a9c5f2);
}

/* Document area */
.workspace {
  flex: 1;
  display: grid;
  grid-template: 1fr 24px / 1fr 24px;
  border-left: 2px solid #808080;
  border-right: 8px solid #8f98b0;
  padding-right: 3px;
}
.sheet { background: #fff; font: 16px/20px var(--doc); }
.filters {
  display: grid;
  grid-template-columns: 277fr 309fr 273fr 289fr 285fr 312fr;
  gap: 10px;
  align-items: start;
  padding: 18px 88px 0 0;
}
.multibox {
  position: relative;
  display: grid;
  grid-template-columns: 160px 1fr;
  grid-auto-rows: 25px;
  border: 2px solid var(--blue);
}
.multibox-cut { grid-template-columns: 129px 1fr; border-left: 0; }
.multibox > button, .product-row button {
  display: flex;
  align-items: center;
  justify-content: space-between;
  padding: 0 3px 2px 3px;
  font-size: 16px;
  white-space: nowrap;
}
.multibox-cut > button { padding-left: 0; }
.multibox > button svg, .product-row button svg { width: 10px; height: 6px; }
.val {
  display: grid;
  place-items: center;
  border-left: 2px solid #dcdcdc;
  border-bottom: 1px solid #fff;
  background: linear-gradient(#e8e8e8, #f6f6f6);
}
.dot { width: 9px; height: 9px; border: 2px solid #a5a5a5; border-radius: 50%; background: #f4f4f4; }
.dot-on { border: 1px solid #5d9a1e; background: radial-gradient(circle at 40% 35%, #c5f06a, #55a511); }

/* Drop-down list of product values */
.popup {
  position: absolute;
  z-index: 5;
  top: -13px;
  left: 161px;
  display: grid;
  grid-template: auto 19px / 98px 25px;
  background: #fff;
  box-shadow: 0 1px 5px #777;
}
.popup-list { list-style: none; overflow: hidden; }
.popup-list li { height: 25px; border-bottom: 1px solid #c9c9c9; }
.popup-list li:last-child { border-bottom: 0; }
.popup-list label { display: flex; align-items: center; gap: 3px; height: 23px; color: #3c3c3c; font-size: 15px; white-space: nowrap; }
.popup-list input {
  appearance: none;
  flex: none;
  width: 12px;
  height: 12px;
  margin: 0 0 0 1px;
  border: 2px solid #b0b0b0;
  border-radius: 3px;
  background: #fff;
  box-shadow: 0 1px 2px #aaa;
}
.popup-vscroll, .popup-hscroll, .sel-vscroll, .sel-hscroll { display: flex; align-items: center; color: #d0d0d0; fill: #d0d0d0; }
.popup-vscroll { flex-direction: column; padding: 6px 0 8px; }
.popup-vscroll svg { width: 12px; height: 14px; }
.popup-vscroll i, .popup-hscroll i { width: 10px; height: 10px; border-radius: 50%; background: #d0d0d0; }
.popup-vscroll i { margin: 5px 0 auto; }
.popup-hscroll { padding: 0 4px 4px 6px; }
.popup-hscroll svg { width: 13px; height: 13px; }
.popup-hscroll i { margin: 0 auto 0 6px; }
.callout { position: absolute; top: -10px; left: -27px; width: 155px; height: 714px; border: 3px solid #d9242c; }

/* Dashboard */
.columns { display: flex; }
.dash { flex: 1503 1 0; min-width: 0; color: var(--ink); }
.dash-head { display: flex; height: 44px; margin-top: 23px; padding-right: 6px; }
.dash-head h2 { flex: 1 1 0; min-width: 0; font-size: 30px; line-height: 28px; white-space: nowrap; }
.bucket { display: flex; flex: 0 0 226px; align-items: center; justify-content: space-between; padding-right: 6px; color: #000; font-size: 27px; line-height: 40px; white-space: nowrap; }
.bucket svg { width: 9px; height: 5px; }
.bucket-value { flex: 0 0 308px; padding-left: 6px; background: #80c41c; color: #10200a; font-size: 29px; line-height: 40px; white-space: nowrap; }
.search { flex: 0 0 356px; display: flex; align-items: center; height: 36px; margin: 6px 0 0 12px; padding: 0 8px 0 10px; border: 2px solid #2a76c4; }
.search-icon { width: 24px; height: 24px; }
.search input { flex: 1; min-width: 0; margin-left: 2px; border: 0; padding: 0; outline: 0; background: none; font: italic 18px/24px var(--doc); }
.search input::placeholder { color: #a0a0a0; opacity: 1; }
.search-drop { width: 20px; height: 12px; color: #8a8a8a; }
.crumbs { height: 48px; margin: 10px 6px 0 0; border: 2px solid var(--line); border-left: 0; background: #fafafa; font-size: 22px; line-height: 48px; white-space: nowrap; }
.dashes { height: 4px; margin-top: 16px; background: repeating-linear-gradient(90deg, #cdcdcd 0 12px, transparent 12px 16px); }
.dashes-end { margin-top: 41px; }
.cards { display: grid; grid-template-columns: 295fr 348fr 348fr 348fr; gap: 12px; margin-top: 15px; padding-right: 128px; }
.card { border: 2px solid var(--line); background: #e8e7e3; }
.card-top { height: 202px; background: #fafafa; }
.card-outs { border-left: 0; }
.card-below { background: #fafafa; }
.card h3 { padding-top: 11px; font-size: 27px; line-height: 36px; text-align: center; white-space: nowrap; }
.card-outs h3 { text-align: left; }
.kpi { display: flex; justify-content: flex-end; height: 81px; margin: 9px -2px 0 0; }
.kpi strong { margin-right: 19px; font-size: 50px; font-weight: normal; line-height: 67px; }
.badge { width: 120px; height: 73px; overflow: hidden; box-sizing: content-box; border-bottom: 8px solid; text-align: center; font-weight: bold; }
.badge b { display: block; padding-top: 9px; color: #fff; font-size: 23px; line-height: 25px; }
.badge span { display: block; padding-top: 5px; color: #33372c; font-size: 14px; line-height: 20px; }
.badge-good { border-color: #bbd753; background: #bbd753; }
.badge-bad { border-color: #fd7361; background: #fd7361; }
.trend { padding-top: 27px; color: #333; font-size: 16px; font-weight: bold; line-height: 20px; text-align: center; white-space: nowrap; }
.trend-low { padding-top: 33px; }
.card-outs .trend { padding-right: 51px; }
.card-below .trend { padding-left: 12px; }
.card-above .trend, .card-within .trend { padding-right: 12px; }
.chart { position: relative; height: 135px; border: solid var(--line); border-width: 2px 0; background: #f4f3f1; }
.chart > svg:first-child { width: 100%; height: 131px; }
.gridline { fill: none; stroke: #d9d9d7; }
.line { fill: none; stroke-width: 5; stroke-linejoin: round; }
.chart circle { fill: #fff; }
.talk { position: absolute; top: 40px; right: 6px; width: 32px; height: 50px; }
.card-above .talk { top: 22px; right: -5px; }
.abc { margin: 5px 0 8px; border-spacing: 0; color: #383838; font-size: 28px; line-height: 36px; }
.abc th, .abc td { height: 40px; padding: 0; }
.abc th { font-weight: normal; text-align: left; }
.abc td { text-align: right; }
.card-outs .abc { width: 176px; margin-left: 67px; }
.card-below .abc { width: 160px; margin-left: 110px; }
.card-below .abc th { padding-top: 4px; }
.card-above .abc { width: 192px; margin-left: 79px; }
.card-within .abc { width: 174px; margin-left: 103px; }
.card-above .abc, .card-within .abc { margin-top: 11px; margin-bottom: 2px; }
.next-row { display: flex; justify-content: space-between; width: 762px; height: 8px; margin-top: 17px; padding-left: 341px; }
.next-row i { width: 4px; background: #cdcdcd; }
.next-row i + i { height: 2px; margin-top: 5px; background: #e2e2e2; }

/* Side column */
.side { flex: 380 1 0; min-width: 0; color: #000; }
.selections { margin: 26px 19px 0 5px; height: 129px; border: 2px solid var(--blue); }
.selections header { display: flex; align-items: end; justify-content: space-between; height: 28px; padding: 0 8px 0 6px; border-bottom: 1px solid var(--blue); background: #e7e7e7; }
.selections h2 { color: #333; font: bold 19px/28px "DejaVu Sans Condensed", "DejaVu Sans", sans-serif; }
.selections header button { width: 11px; height: 4px; margin-bottom: 8px; background: #222; }
.sel-body { display: flex; justify-content: space-between; padding: 0 6px 0 3px; }
.sel-rows { height: 74px; overflow: hidden; }
.sel-row { display: flex; align-items: start; font-size: 16px; line-height: 21px; }
.sel-row + .sel-row { margin-top: 4px; }
.sel-name { width: 112px; white-space: nowrap; }
.eraser { width: 14px; height: 14px; }
.sel-drop { width: 7px; height: 5px; margin: 4px 16px 0 2px; }
.sel-row .dot { flex: none; width: 8px; margin: 19px 14px 0 0; }
.sel-vscroll { flex-direction: column; justify-content: space-between; height: 68px; padding-top: 6px; }
.sel-vscroll svg, .sel-hscroll svg { width: 12px; height: 12px; }
.sel-vscroll i { width: 10px; height: 9px; margin: 3px 0 15px; border-radius: 50%; background: #d0d0d0; }
.sel-hscroll { gap: 7px; padding: 4px 30px 0 6px; }
.sel-hscroll i { width: 207px; height: 10px; margin-right: auto; border-radius: 5px; background: #d0d0d0; }
.product { width: 250px; margin: 62px 0 0 -30px; }
.product-head { height: 28px; border-bottom: 1px solid var(--blue); background: #e6e6e6; }
.product-row { display: grid; grid-template-columns: 101px 1fr; height: 27px; }
.product-row button { padding-left: 0; font-size: 18px; }

/* Scroll bars */
.vscroll, .hscroll { display: flex; background: #f0f0f0; }
.vscroll { flex-direction: column; justify-content: space-between; }
.vscroll button, .hscroll button { display: grid; place-items: center; width: 26px; height: 26px; }
.vscroll svg { width: 12px; height: 10px; }
.hscroll svg { width: 10px; height: 12px; }
.hscroll button { height: 24px; }
.vscroll i { flex: 0 0 36%; margin-bottom: auto; background: #cdcdcd; }
.hscroll i { flex: 1; margin-left: 163px; background: #cdcdcd; }
.corner { background: #c8c8c8; }

/* Status bar */
.status { display: flex; align-items: center; height: 32px; padding: 5px 0 0 3px; border-top: 1px solid #e2e2e2; background: #f0f0f0; }
.status span { border-right: 1px solid #d5d5d5; font-size: 18px; line-height: 28px; white-space: nowrap; }
.status .status-help { border: 0; margin-right: auto; font-size: 17px; }
.status-date { padding-right: 4px; }
.status-d { margin-left: 10px; padding: 0 4px 0 6px; border-left: 1px solid #d5d5d5; }
.status-f { padding: 0 5px; }
.status .status-led { border: 0; padding-left: 10px; }
.status-led .dot { display: block; }
```
